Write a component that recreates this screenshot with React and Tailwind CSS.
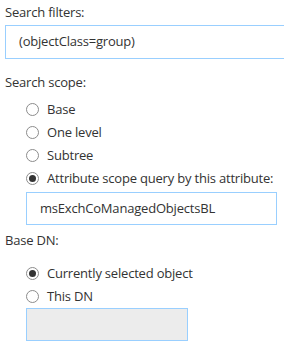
import React from 'react';

function Radio({ checked, label }) {
  return (
    <div className="flex items-center h-[23px]">
      <span className="w-[13px] h-[13px] rounded-full border border-[#8c8c8c] bg-white flex items-center justify-center shrink-0">
        {checked && <span className="w-[7px] h-[7px] rounded-full bg-[#333]" />}
      </span>
      <span className="ml-[8px] text-[13px] text-[#333] whitespace-nowrap">{label}</span>
    </div>
  );
}

export default function App() {
  return (
    <div
      className="w-[284px] h-[352px] overflow-hidden bg-white pl-[5px] pt-[3px] text-[#333] tracking-[-0.2px]"
      style={{ fontFamily: '"Open Sans", "Noto Sans", sans-serif' }}
    >
      <div className="text-[13px] leading-[18px]">Search filters:</div>
      <div className="mt-[4px] w-[300px] h-[34px] border border-[#99cfff] flex items-center pl-[13px] text-[13px]">
        (objectClass=group)
      </div>

      <div className="mt-[14px] text-[13px] leading-[18px]">Search scope:</div>
      <div className="mt-[7px] pl-[21px]">
        <Radio label="Base" />
        <Radio label="One level" />
        <Radio label="Subtree" />
        <Radio checked label="Attribute scope query by this attribute:" />
        <div className="mt-[2px] w-[251px] h-[33px] border border-[#99cfff] flex items-center pl-[13px] text-[13px]">
          msExchCoManagedObjectsBL
        </div>
      </div>

      <div className="mt-[6px] text-[13px] leading-[18px]">Base DN:</div>
      <div className="mt-[13px] pl-[21px]">
        <Radio checked label="Currently selected object" />
        <Radio label="This DN" />
        <div className="w-[162px] h-[33px] border border-[#99cfff] bg-[#ececec]" />
      </div>
    </div>
  );
}
